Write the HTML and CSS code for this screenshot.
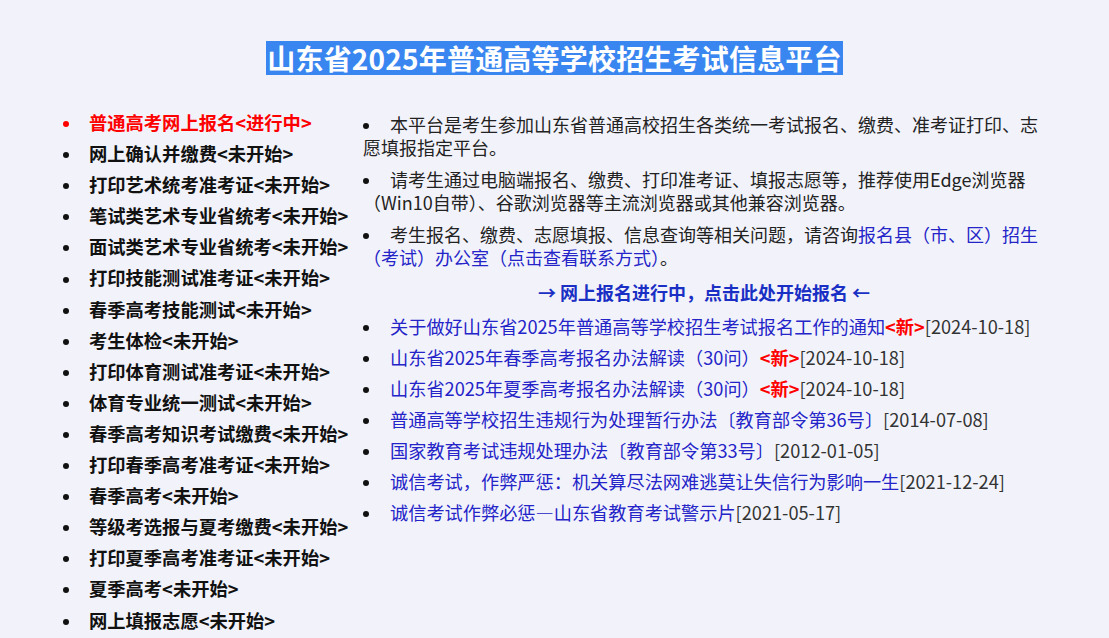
FILE: index.html
```html
<!DOCTYPE html>
<html lang="zh-CN">
<head>
<meta charset="utf-8">
<title>山东省2025年普通高等学校招生考试信息平台</title>
<link rel="stylesheet" href="styles.css">
</head>
<body>
<header class="head">
  <h1 class="title"><span class="title-mark">山东省2025年普通高等学校招生考试信息平台</span></h1>
</header>
<main class="main">
  <ul class="menu">
    <li class="menu-item active">普通高考网上报名&lt;进行中&gt;</li>
    <li class="menu-item">网上确认并缴费&lt;未开始&gt;</li>
    <li class="menu-item">打印艺术统考准考证&lt;未开始&gt;</li>
    <li class="menu-item">笔试类艺术专业省统考&lt;未开始&gt;</li>
    <li class="menu-item">面试类艺术专业省统考&lt;未开始&gt;</li>
    <li class="menu-item">打印技能测试准考证&lt;未开始&gt;</li>
    <li class="menu-item">春季高考技能测试&lt;未开始&gt;</li>
    <li class="menu-item">考生体检&lt;未开始&gt;</li>
    <li class="menu-item">打印体育测试准考证&lt;未开始&gt;</li>
    <li class="menu-item">体育专业统一测试&lt;未开始&gt;</li>
    <li class="menu-item">春季高考知识考试缴费&lt;未开始&gt;</li>
    <li class="menu-item">打印春季高考准考证&lt;未开始&gt;</li>
    <li class="menu-item">春季高考&lt;未开始&gt;</li>
    <li class="menu-item">等级考选报与夏考缴费&lt;未开始&gt;</li>
    <li class="menu-item">打印夏季高考准考证&lt;未开始&gt;</li>
    <li class="menu-item">夏季高考&lt;未开始&gt;</li>
    <li class="menu-item">网上填报志愿&lt;未开始&gt;</li>
  </ul>
  <section class="content">
    <ul class="notes">
      <li class="note">本平台是考生参加山东省普通高校招生各类统一考试报名、缴费、准考证打印、志愿填报指定平台。</li>
      <li class="note">请考生通过电脑端报名、缴费、打印准考证、填报志愿等，推荐使用Edge浏览器（Win10自带）、谷歌浏览器等主流浏览器或其他兼容浏览器。</li>
      <li class="note">考生报名、缴费、志愿填报、信息查询等相关问题，请咨询<a class="link" href="#">报名县（市、区）招生（考试）办公室（点击查看联系方式）</a>。</li>
    </ul>
    <p class="start"><a class="start-link" href="#">→ 网上报名进行中，点击此处开始报名 ←</a></p>
    <ul class="news">
      <li class="news-item"><a class="link" href="#">关于做好山东省2025年普通高等学校招生考试报名工作的通知</a><span class="new">&lt;新&gt;</span><span class="date">[2024-10-18]</span></li>
      <li class="news-item"><a class="link" href="#">山东省2025年春季高考报名办法解读（30问）</a><span class="new">&lt;新&gt;</span><span class="date">[2024-10-18]</span></li>
      <li class="news-item"><a class="link" href="#">山东省2025年夏季高考报名办法解读（30问）</a><span class="new">&lt;新&gt;</span><span class="date">[2024-10-18]</span></li>
      <li class="news-item"><a class="link" href="#">普通高等学校招生违规行为处理暂行办法〔教育部令第36号〕</a><span class="date">[2014-07-08]</span></li>
      <li class="news-item"><a class="link" href="#">国家教育考试违规处理办法〔教育部令第33号〕</a><span class="date">[2012-01-05]</span></li>
      <li class="news-item"><a class="link" href="#">诚信考试，作弊严惩：机关算尽法网难逃莫让失信行为影响一生</a><span class="date">[2021-12-24]</span></li>
      <li class="news-item"><a class="link" href="#">诚信考试作弊必惩—山东省教育考试警示片</a><span class="date">[2021-05-17]</span></li>
    </ul>
  </section>
</main>
</body>
</html>
```

FILE: styles.css
```css
* { box-sizing: border-box; }
html, body {
  margin: 0;
  padding: 0;
  background: #f2f3fa;
}
body {
  font-family: "Noto Sans CJK SC", "Noto Sans", sans-serif;
  color: #222;
}
.head {
  padding-top: 41px;
  text-align: center;
}
.title {
  margin: 0;
  font-size: 28px;
  font-weight: 700;
  line-height: 34px;
}
.title-mark {
  display: inline-block;
  background: #3a86f0;
  color: #fff;
  letter-spacing: 0.2px;
  padding: 0 1px;
  height: 34px;
  line-height: 34px;
}
.main {
  display: flex;
  padding: 32px 0 0 63px;
  align-items: flex-start;
}
.menu {
  list-style: none;
  margin: 0;
  padding: 0;
  width: 300px;
  flex: none;
}
.menu-item {
  font-size: 18.3px;
  font-weight: 700;
  line-height: 31.1px;
  height: 31.1px;
  color: #111;
  white-space: nowrap;
}
.menu-item::before,
.note::before,
.news-item::before {
  content: "";
  display: inline-block;
  width: 6px;
  height: 6px;
  border-radius: 50%;
  background: #111;
  vertical-align: middle;
  margin-right: 20px;
  position: relative;
  top: -1px;
}
.menu-item.active { color: #f00; }
.menu-item.active::before { background: #f00; }
.content {
  width: 682px;
  flex: none;
  padding-top: 5px;
}
.notes {
  list-style: none;
  margin: 0;
  padding: 0;
}
.note {
  font-size: 18px;
  line-height: 23px;
  color: #222;
  margin-top: 1px;
  margin-bottom: 9px;
}
.note::before { margin-right: 21px; }
.link {
  color: #2424c8;
  text-decoration: none;
}
.note .link {
  line-height: 1;
}
.start {
  margin: 10px 0 0;
  text-align: center;
  font-size: 18px;
  font-weight: 700;
  line-height: 26px;
}
.start-link {
  color: #1a2fc4;
  text-decoration: none;
}
.news {
  list-style: none;
  margin: 6px 0 0;
  padding: 0;
}
.news-item {
  font-size: 18.2px;
  line-height: 31px;
  white-space: nowrap;
}
.news-item::before { margin-right: 21px; }
.new {
  color: #f00;
  font-weight: 700;
}
.date {
  color: #333;
}
```
